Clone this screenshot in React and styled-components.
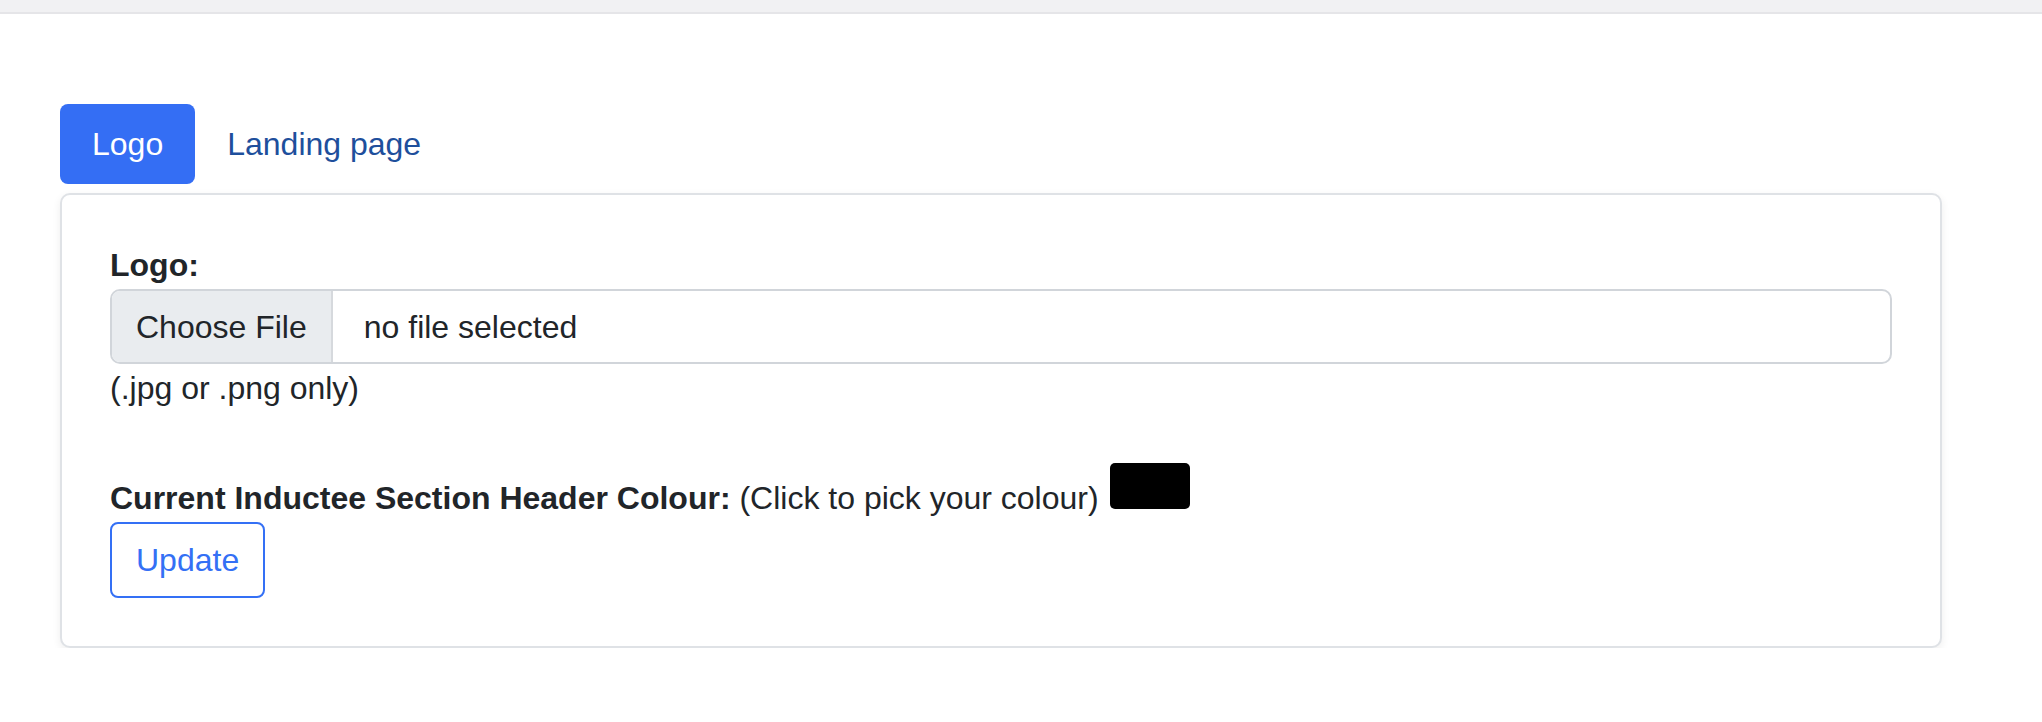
import React from 'react';
import styled, { createGlobalStyle } from 'styled-components';

const GlobalStyle = createGlobalStyle`
    html, body {
        margin: 0;
        padding: 0;
        background-color: #fff;
    }

    body {
        font-family: "Liberation Sans", Arial, Helvetica, sans-serif;
        font-size: 32px;
        line-height: 48px;
        color: #212529;
    }
`;

const TopBar = styled.div`
    height: 12px;
    background-color: #f1f1f3;
    border-bottom: 2px solid #e5e5e8;
`;

const Container = styled.div`
    padding: 90px 0 0 60px;
    width: 1882px;
`;

const Tabs = styled.ul`
    display: flex;
    list-style: none;
    margin: 0 0 9px;
    padding: 0;
`;

const Tab = styled.li`
    padding: 16px 32px;
    border-radius: 8px;
    cursor: pointer;
    background-color: ${(props) => (props.active ? "#346ef4" : "transparent")};
    color: ${(props) => (props.active ? "#fff" : "#1e4f9c")};
`;

const Card = styled.div`
    background-color: #fff;
    border: 2px solid #dfe2e6;
    border-radius: 10px;
    box-shadow: 0 3px 8px rgba(0, 0, 0, 0.07);
    padding: 46px 48px 48px;
`;

const Label = styled.label`
    display: block;
    font-weight: bold;
`;

const FileInput = styled.div`
    display: flex;
    height: 75px;
    box-sizing: border-box;
    border: 2px solid #d1d5da;
    border-radius: 10px;
    overflow: hidden;
`;

const FileButton = styled.span`
    display: flex;
    align-items: center;
    padding: 0 24px;
    background-color: #e9ecef;
    border-right: 2px solid #d6d9dd;
`;

const FileName = styled.span`
    display: flex;
    align-items: center;
    padding: 0 31px;
`;

const Hint = styled.div``;

const ColourRow = styled.div`
    margin-top: 51px;
`;

const Bold = styled.b``;

const Swatch = styled.span`
    display: inline-block;
    width: 80px;
    height: 46px;
    border-radius: 5px;
    background-color: ${(props) => props.colour};
    vertical-align: baseline;
    margin-left: 2px;
`;

const OutlineButton = styled.button`
    display: block;
    font: inherit;
    line-height: 48px;
    padding: 12px 24px;
    color: #3470f5;
    background-color: #fff;
    border: 2px solid #3470f5;
    border-radius: 8px;
    cursor: pointer;
`;

const App = () => {
    return (
        <>
            <GlobalStyle />
            <TopBar />
            <Container>
                <Tabs>
                    <Tab active>Logo</Tab>
                    <Tab>Landing page</Tab>
                </Tabs>
                <Card>
                    <Label>Logo:</Label>
                    <FileInput>
                        <FileButton>Choose File</FileButton>
                        <FileName>no file selected</FileName>
                    </FileInput>
                    <Hint>(.jpg or .png only)</Hint>
                    <ColourRow>
                        <Bold>Current Inductee Section Header Colour:</Bold> (Click to pick your colour) <Swatch colour="#000" />
                    </ColourRow>
                    <OutlineButton>Update</OutlineButton>
                </Card>
            </Container>
        </>
    );
};

export default App;
